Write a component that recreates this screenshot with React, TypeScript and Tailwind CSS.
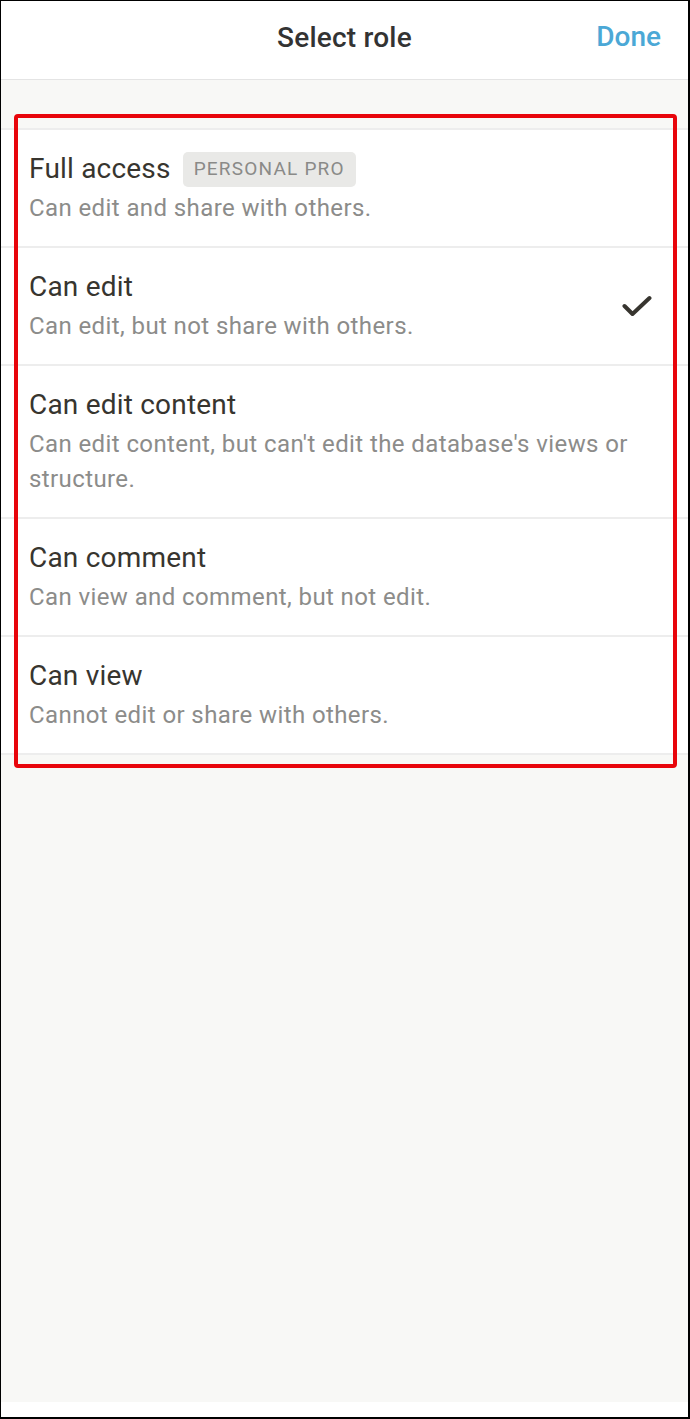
import React from "react";

type Role = { title: string; desc: string; badge?: string; checked?: boolean };

const roles: Role[] = [
  { title: "Full access", desc: "Can edit and share with others.", badge: "PERSONAL PRO" },
  { title: "Can edit", desc: "Can edit, but not share with others.", checked: true },
  {
    title: "Can edit content",
    desc: "Can edit content, but can't edit the database's views or structure.",
  },
  { title: "Can comment", desc: "Can view and comment, but not edit." },
  { title: "Can view", desc: "Cannot edit or share with others." },
];

export default function App() {
  return (
    <div
      className="w-[690px] h-[1419px] flex flex-col bg-white border-black border-t border-l border-r-2 border-b-2 overflow-hidden"
      style={{ fontFamily: "Roboto, 'Noto Sans', sans-serif" }}
    >
      <header className="h-[79px] shrink-0 flex items-center justify-center relative border-b border-[#e4e4e4] bg-white">
        <h1 className="text-[28px] leading-[36px] font-medium text-[#333333] -mt-[4px] tracking-[0.2px]">Select role</h1>
        <button className="absolute right-[27px] top-[18px] text-[28px] leading-[36px] font-medium text-[#4ba8d6]">Done</button>
      </header>
      <main className="flex-1 bg-[#f8f8f6] pt-[48px] relative">
        <ul className="bg-white border-t-2 border-[#ededed]">
          {roles.map((r) => (
            <li
              key={r.title}
              className="flex items-center border-b-2 border-[#ededed] pl-[28px] pr-[36px] pt-[21px] pb-[20px]"
            >
              <div className="flex-1 flex flex-col gap-[4px]">
                <div className="flex items-center gap-[12px] h-[36px]">
                  <span className="text-[28px] leading-[36px] text-[#37352f] tracking-[0.2px]">{r.title}</span>
                  {r.badge && (
                    <span className="bg-[#e9e9e7] rounded-[5px] px-[11px] h-[35px] flex items-center text-[19px] tracking-[1.2px] text-[#8a8a88]">
                      {r.badge}
                    </span>
                  )}
                </div>
                <p className="text-[24px] leading-[35px] text-[#8c8c8a] tracking-[0.4px] pr-[4px]">{r.desc}</p>
              </div>
              {r.checked && (
                <svg width="30" height="22" viewBox="0 0 30 22" className="shrink-0 -mt-[2px]">
                  <path d="M2.5 11 L10.5 19 L27.5 3" fill="none" stroke="#37352f" strokeWidth="4" strokeLinecap="round" strokeLinejoin="round" />
                </svg>
              )}
            </li>
          ))}
        </ul>
        <div className="absolute left-[13px] top-[34px] w-[663px] h-[654px] border-[4px] border-[#e8050b] rounded-[4px] pointer-events-none" />
      </main>
      <div className="h-[15px] shrink-0 bg-white" />
    </div>
  );
}
